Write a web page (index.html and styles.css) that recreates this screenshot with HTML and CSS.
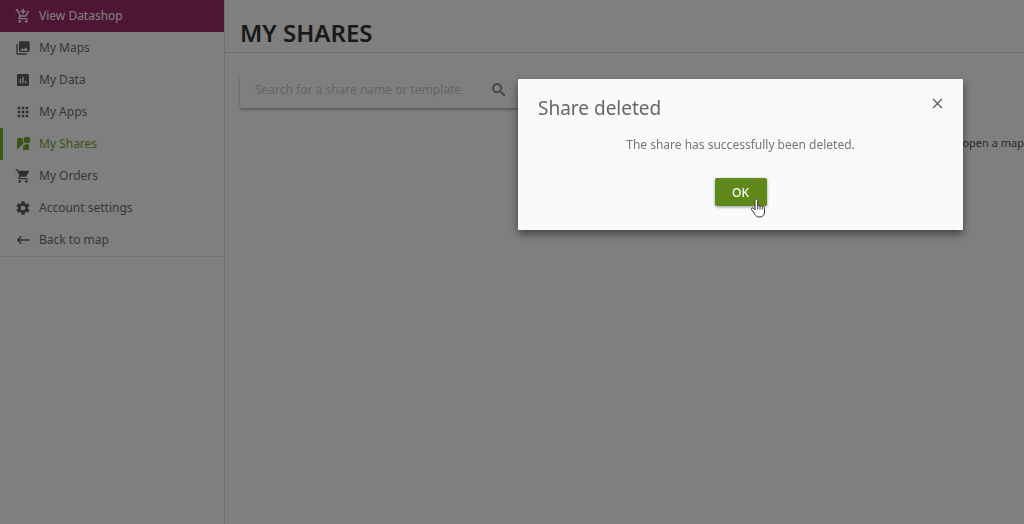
FILE: index.html
```
<!DOCTYPE html>
<html lang="en">
<head>
  <meta charset="UTF-8" />
  <meta name="viewport" content="width=device-width, initial-scale=1.0"/>
  <title>My Shares</title>
  <link rel="stylesheet" href="styles.css">
</head>
<body>

<div class="page">
  <div class="sidebar">
    <nav>
      <a class="nav-item shop" href="#">
        <svg class="icon" viewBox="0 0 24 24"><path d="M11 9h2V6h3V4h-3V1h-2v3H8v2h3v3zm-4 9c-1.1 0-1.99.9-1.99 2S5.900 22 7 22s2-.9 2-2-.9-2-2-2zm10 0c-1.100 0-1.990.9-1.990 2s.89 2 1.990 2 2-.9 2-2-.9-2-2-2zm-9.830-3.250l.03-.12.9-1.630h7.450c.75 0 1.410-.41 1.750-1.030l3.860-7.010L19.420 4h-.01l-1.100 2-2.760 5H8.530l-.13-.27L6.160 6l-.95-2-.94-2H1v2h2l3.600 7.590-1.350 2.450c-.16.28-.25.61-.25.96 0 1.100.9 2 2 2h12v-2H7.420c-.13 0-.25-.11-.25-.25z"/></svg>
        View Datashop
      </a>
      <a class="nav-item" href="#">
        <svg class="icon" viewBox="0 0 24 24"><path d="M22 16V4c0-1.100-.9-2-2-2H8c-1.100 0-2 .9-2 2v12c0 1.100.9 2 2 2h12c1.100 0 2-.9 2-2zm-11-4l2.030 2.710L16 11l4 5H8l3-4zM2 6v14c0 1.100.9 2 2 2h14v-2H4V6H2z"/></svg>
        My Maps
      </a>
      <a class="nav-item" href="#">
        <svg class="icon" viewBox="0 0 24 24"><path d="M19 3H5c-1.100 0-2 .9-2 2v14c0 1.100.9 2 2 2h14c1.100 0 2-.9 2-2V5c0-1.100-.9-2-2-2zM9 17H7v-7h2v7zm4 0h-2V7h2v10zm4 0h-2v-4h2v4z"/></svg>
        My Data
      </a>
      <a class="nav-item" href="#">
        <svg class="icon" viewBox="0 0 24 24"><path d="M4 8h4V4H4v4zm6 12h4v-4h-4v4zm-6 0h4v-4H4v4zm0-6h4v-4H4v4zm6 0h4v-4h-4v4zm6-10v4h4V4h-4zm-6 4h4V4h-4v4zm6 6h4v-4h-4v4zm0 6h4v-4h-4v4z"/></svg>
        My Apps
      </a>
      <a class="nav-item active" href="#">
        <svg class="icon" viewBox="0 0 24 24"><path d="M12.560 14.330c-.34.27-.56.7-.56 1.170V21h7c1.100 0 2-.9 2-2v-5.980c-.94-.33-1.950-.52-3-.52-2.030 0-3.930.7-5.440 1.830z"/><circle cx="18" cy="6" r="5"/><path d="M11.500 6c0-1.080.27-2.100.74-3H5c-1.100 0-2 .9-2 2v14c0 .55.23 1.050.59 1.410l9.820-9.820C12.230 9.420 11.500 7.800 11.500 6z"/></svg>
        My Shares
      </a>
      <a class="nav-item" href="#">
        <svg class="icon" viewBox="0 0 24 24"><path d="M7 18c-1.100 0-1.990.9-1.990 2S5.900 22 7 22s2-.9 2-2-.9-2-2-2zM1 2v2h2l3.600 7.590-1.350 2.450c-.16.28-.25.61-.25.96 0 1.100.9 2 2 2h12v-2H7.420c-.14 0-.25-.11-.25-.25l.03-.12.9-1.630h7.450c.75 0 1.410-.41 1.750-1.030l3.580-6.490c.08-.14.12-.31.12-.48 0-.55-.45-1-1-1H5.210l-.94-2H1zm16 16c-1.100 0-1.990.9-1.990 2s.89 2 1.990 2 2-.9 2-2-.9-2-2-2z"/></svg>
        My Orders
      </a>
      <a class="nav-item" href="#">
        <svg class="icon" viewBox="0 0 24 24"><path d="M19.430 12.980c.04-.32.07-.64.07-.98s-.03-.66-.07-.98l2.110-1.650c.19-.15.24-.42.12-.64l-2-3.460c-.12-.22-.39-.3-.61-.22l-2.490 1c-.52-.4-1.080-.73-1.690-.98l-.38-2.650C14.460 2.180 14.250 2 14 2h-4c-.25 0-.46.18-.49.42l-.38 2.650c-.61.25-1.170.59-1.690.98l-2.490-1c-.23-.09-.49 0-.61.22l-2 3.460c-.13.22-.07.49.12.64l2.110 1.650c-.04.32-.07.65-.07.98s.03.66.07.98l-2.110 1.650c-.19.15-.24.42-.12.64l2 3.460c.12.22.39.3.61.22l2.490-1c.52.4 1.080.73 1.690.98l.38 2.650c.03.24.24.42.49.42h4c.25 0 .46-.18.49-.42l.38-2.650c.61-.25 1.170-.59 1.690-.98l2.490 1c.23.09.49 0 .61-.22l2-3.460c.12-.22.07-.49-.12-.64l-2.110-1.650zM12 15.500c-1.930 0-3.500-1.570-3.500-3.500s1.570-3.500 3.500-3.500 3.500 1.570 3.500 3.500-1.570 3.500-3.500 3.500z"/></svg>
        Account settings
      </a>
      <a class="nav-item" href="#">
        <svg class="icon line" viewBox="0 0 24 24"><path d="M22 12H4M9.500 6.500L4 12l5.500 5.500"/></svg>
        Back to map
      </a>
    </nav>
  </div>

  <main class="content">
    <header>
      <h1>MY SHARES</h1>
    </header>
    <div class="search">
      <input type="text" aria-label="Search shares" placeholder="Search for a share name or template" />
      <button class="search-btn" aria-label="Search">
        <svg class="icon" viewBox="0 0 24 24"><path d="M15.500 14h-.79l-.28-.27C15.410 12.590 16 11.110 16 9.500 16 5.910 13.090 3 9.500 3S3 5.910 3 9.500 5.910 16 9.500 16c1.610 0 3.090-.59 4.230-1.570l.27.28v.79l5 4.990L20.490 19l-4.990-5zm-6 0C7.010 14 5 11.990 5 9.500S7.010 5 9.500 5 14 7.010 14 9.500 11.990 14 9.500 14z"/></svg>
      </button>
    </div>
    <p class="hint">open a map</p>
  </main>
</div>

<div class="overlay">
  <div class="dialog" role="dialog" aria-labelledby="dialogTitle">
    <div class="dialog-head">
      <h2 id="dialogTitle">Share deleted</h2>
      <button class="close-btn" aria-label="Close">
        <svg viewBox="0 0 10 10"><path d="M1 1l8 8M9 1l-8 8"/></svg>
      </button>
    </div>
    <p>The share has successfully been deleted.</p>
    <div class="actions">
      <button class="btn">OK</button>
      <svg class="cursor" viewBox="0 0 16 20"><path d="M5 12V2.500C5 .5 7.700.5 7.700 2.500V8c.3-1.200 2.300-1 2.300.5.4-1 2.300-.8 2.300.7.500-.8 2.200-.5 2.200 1V14c0 3-1.800 5-4.500 5H9c-2 0-3-1-4-2.600L1.700 11.800C.8 10.300 2.500 9.200 3.700 10.500zM7.700 8v3.500M10 8.500v3M12.300 9.500v2"/></svg>
    </div>
  </div>
</div>

</body>
</html>
```
FILE: styles.css
```
* {
  box-sizing: border-box;
}
body {
  font-family: "Noto Sans", sans-serif;
  font-size: 12px;
  line-height: 16px;
  color: #666;
  background: #fff;
  margin: 0;
}
h1, h2, p {
  margin: 0;
}
button {
  font-family: inherit;
  border: none;
  padding: 0;
  background: none;
  cursor: pointer;
}
.icon {
  width: 16px;
  height: 16px;
  fill: currentColor;
}
.icon.line {
  fill: none;
  stroke: currentColor;
  stroke-width: 2;
}
.page {
  display: flex;
  min-height: 100vh;
  overflow: hidden;
}
.sidebar {
  flex: 0 0 225px;
  border-right: 1px solid #e0e0e0;
}
nav {
  border-bottom: 1px solid #e0e0e0;
}
.nav-item {
  display: flex;
  align-items: center;
  gap: 8px;
  height: 32px;
  padding-left: 12px;
  border-left: 3px solid transparent;
  color: #6e6e6e;
  text-decoration: none;
}
.nav-item .icon {
  color: #5e5e5e;
}
.nav-item.shop {
  background: #9e2a68;
  border-left-color: #9e2a68;
}
.nav-item.shop, .nav-item.shop .icon {
  color: #fff;
}
.nav-item.active {
  border-left-color: #7eb41c;
}
.nav-item.active, .nav-item.active .icon {
  color: #76a826;
}
.content {
  flex: 1;
  min-width: 0;
}
header {
  padding: 15px 15px 0;
  height: 53px;
  border-bottom: 1px solid #e0e0e0;
}
h1 {
  font-size: 24px;
  line-height: 36px;
  font-weight: 600;
  color: #333;
}
.search {
  display: flex;
  align-items: center;
  width: 278px;
  height: 36px;
  margin: 19px 15px 0;
  padding: 0 10px 0 15px;
  border-radius: 2px;
  box-shadow: 0 2px 3px rgba(0,0,0,0.3);
}
.search input {
  flex: 1;
  min-width: 0;
  border: none;
  padding: 0;
  outline: none;
  background: none;
  font: inherit;
}
.search input::placeholder {
  color: #cacaca;
}
.search-btn {
  display: flex;
  color: #757575;
}
.search-btn .icon {
  width: 18px;
  height: 18px;
}
.hint {
  margin-top: 27px;
  text-align: right;
  font-size: 11px;
  color: #555;
  white-space: nowrap;
}
.overlay {
  position: fixed;
  inset: 0;
  display: flex;
  justify-content: flex-end;
  align-items: flex-start;
  padding: 79px 61px;
  background: rgba(0,0,0,0.5);
}
.dialog {
  width: 445px;
  padding: 16px 20px 24px;
  background: #fafafa;
  border-radius: 1px;
  box-shadow: 0 4px 8px rgba(0,0,0,0.5);
}
.dialog-head {
  display: flex;
  justify-content: space-between;
  align-items: flex-start;
}
h2 {
  font-size: 19px;
  line-height: 26px;
  font-weight: 400;
}
.close-btn {
  display: flex;
  padding: 3px 0;
}
.close-btn svg {
  width: 11px;
  height: 11px;
  fill: none;
  stroke: #666;
  stroke-width: 1.3;
}
.dialog p {
  margin: 16px 0 25px;
  text-align: center;
  color: #757575;
}
.actions {
  position: relative;
  display: flex;
  justify-content: center;
}
.btn {
  width: 52px;
  height: 28px;
  border-radius: 2px;
  background: #5f881b;
  color: #fff;
  font-size: 12px;
  font-weight: 500;
  box-shadow: 0 1px 3px rgba(0,0,0,0.4);
}
.cursor {
  position: absolute;
  left: 50%;
  top: 20px;
  width: 16px;
  height: 20px;
  margin-left: 9px;
  fill: #fff;
  stroke: #333;
  stroke-width: 1;
}
```
